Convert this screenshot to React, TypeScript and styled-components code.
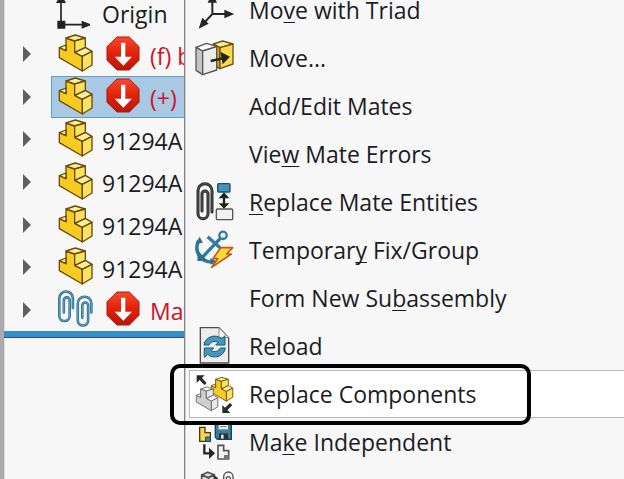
import React from "react";
import styled, { createGlobalStyle } from "styled-components";

const GlobalStyle = createGlobalStyle`
  * { box-sizing: border-box; }
  body {
    margin: 0;
    overflow: hidden;
    background: #f7f7f7;
    color: #1c1c24;
    font-family: "Open Sans", "Noto Sans", sans-serif;
    font-size: 23px;
    line-height: 32px;
  }
  button {
    font: inherit;
    color: inherit;
    background: none;
    border: 0;
    padding: 0;
    text-align: left;
  }
`;

const Page = styled.div`
  display: grid;
  grid-template-columns: 184px minmax(0, 1fr);
  height: 100vh;
  overflow: hidden;
`;

const TreePanel = styled.nav`
  border-left: 4px solid #ababab;
  box-shadow: inset 1px 0 0 #dcdcdc;
  overflow: hidden;
`;

const OriginRow = styled.div`
  display: flex;
  align-items: center;
  gap: 12px;
  height: 33px;
  padding-left: 50px;
  white-space: nowrap;
`;

const OriginLabel = styled.span`
  padding-bottom: 6px;
`;

const TreeList = styled.ul`
  display: grid;
  grid-auto-rows: 1fr;
  height: 298px;
  margin: 0;
  padding: 0;
  list-style: none;
`;

const TreeItem = styled.li`
  display: flex;
`;

const Toggle = styled.button`
  display: flex;
  align-items: center;
  width: 47px;
  padding-left: 19px;
`;

const Node = styled.button<{ $selected?: boolean; $error?: boolean }>`
  flex: 1;
  display: flex;
  align-items: center;
  min-width: 0;
  padding-left: 6px;
  overflow: hidden;
  white-space: nowrap;
  border: 1px solid ${(p) => (p.$selected ? "#5b9fcb" : "transparent")};
  border-right: 0;
  background: ${(p) => (p.$selected ? "#a8c8e3" : "transparent")};
  color: ${(p) => (p.$error ? "#cf1228" : "inherit")};
  svg { flex: none; }
`;

const NodeIcon = styled.span`
  display: flex;
  flex: none;
  padding-bottom: 2px;
`;

const NodeLabel = styled.span`
  padding-top: 3px;
  padding-left: 9px;
`;

const ErrorSlot = styled.span`
  display: flex;
  padding-left: 13px;
  padding-bottom: 2px;
`;

const RollbackBar = styled.div`
  height: 7px;
  background: #3590ca;
  border-bottom: 1px solid #2f45b4;
`;

const Menu = styled.div`
  position: relative;
  margin-top: -14px;
  border-left: 1px solid #858585;
  background: #f7f7f7;
  box-shadow: 1px 0 0 #cfcfcf inset;
`;

const MenuItem = styled.button<{ $active?: boolean }>`
  position: relative;
  display: flex;
  align-items: center;
  gap: 14px;
  width: calc(100% - 4px);
  height: 48px;
  margin-left: 4px;
  padding-left: 5px;
  white-space: nowrap;
  border: 1px solid ${(p) => (p.$active ? "#b9b9b9" : "transparent")};
  border-right: 0;
  background: ${(p) => (p.$active ? "#ffffff" : "transparent")};
`;

const IconSlot = styled.span`
  flex: none;
  width: 40px;
  height: 40px;
  svg { display: block; }
`;

const Mnemonic = styled.span`
  text-decoration: underline;
  text-decoration-thickness: 1px;
  text-underline-offset: 3px;
  text-decoration-skip-ink: none;
`;

const Callout = styled.span`
  position: absolute;
  z-index: 1;
  top: -7px;
  left: -20px;
  width: 361px;
  height: 61px;
  border: 4px solid #000;
  border-radius: 10px;
  pointer-events: none;
`;

function PartShape({ grey }: { grey?: boolean }) {
  const front = grey ? "#cfcfcf" : "#f8cb20";
  const top = grey ? "#fafafa" : "#fff0a0";
  const side = grey ? "#e8e8e8" : "#fbe260";
  return (
    <g stroke={grey ? "#666" : "#6b4b08"} strokeWidth="4" strokeLinejoin="round">
      <path fill={front} d="M4 41 24 50V12l26 9v34l23 12v44L4 71Z" />
      <path fill={top} d="m4 41 20-8v17ZM24 12 52 3l30 9-32 9ZM50 55l32-15 20 12-29 15Z" />
      <path fill={side} d="m50 21 32-9v28L50 55ZM73 67l29-15v41l-29 18Z" />
    </g>
  );
}

const PartIcon = () => (
  <svg width="35" height="38" viewBox="0 0 105 114" aria-hidden="true">
    <PartShape />
  </svg>
);

const ErrorIcon = () => (
  <svg width="35" height="35" viewBox="0 0 105 105" role="img" aria-label="Error">
    <defs>
      <linearGradient id="stop" x2="0" y2="1">
        <stop stopColor="#f9492c" />
        <stop offset=".5" stopColor="#e22209" />
        <stop offset="1" stopColor="#b91608" />
      </linearGradient>
    </defs>
    <path d="M33 3h37l29 29v41l-29 29H33L3 73V32Z" fill="url(#stop)" stroke="#a51a10" strokeWidth="3" />
    <path d="M45 20h13v42h20L52 89 26 62h19Z" fill="#fff" />
  </svg>
);

const Triangle = () => (
  <svg width="8" height="16" viewBox="0 0 8 16" aria-hidden="true">
    <path d="M0 0 8 8 0 16Z" fill="#606060" />
  </svg>
);

const OriginIcon = () => (
  <svg width="36" height="33" viewBox="0 0 108 99" aria-hidden="true">
    <path d="M21 74V0M21 74h70" stroke="#222" strokeWidth="5" fill="none" />
    <path d="M10 62h24v24H10ZM83 62l31 12-31 12ZM6 9 21-18 36 9Z" fill="#222" />
  </svg>
);

const ClipsIcon = () => (
  <svg width="35" height="38" viewBox="0 0 108 114" fill="none" aria-hidden="true">
    {["#2b6b8b", "#68a9c8"].map((stroke, i) => (
      <g key={stroke} stroke={stroke} strokeWidth={i ? 3 : 8} strokeLinecap="round">
        <path d="M46 54V24a21 21 0 0 0-42 0v54a16 16 0 0 0 32 0V30a9 9 0 0 0-18 0v38" />
        <path d="M103 68V40a21 21 0 0 0-42 0v52a16 16 0 0 0 32 0V46a9 9 0 0 0-18 0v38" />
      </g>
    ))}
  </svg>
);

const TriadIcon = () => (
  <>
    <path d="M52 24v48h42M52 72 26 100" fill="none" stroke="#262626" strokeWidth="6" />
    <path d="m52 10 14 28H38ZM88 59l30 13-30 13ZM11 116l11-33 19 18Z" fill="#262626" />
  </>
);

const MoveIcon = () => (
  <>
    <g stroke="#6b5311" strokeWidth="4" strokeLinejoin="round">
      <path d="m55 18 28-9 31 9-39 11Z" fill="#fff0a0" />
      <path d="m55 18 20 11v63l-20-10Z" fill="#d9a514" />
      <path d="m75 29 39-11v60L75 92Z" fill="#fada4c" />
    </g>
    <g stroke="#585858" strokeWidth="4" strokeLinejoin="round">
      <path d="m3 28 32-12 30 10-42 13Z" fill="#fff" />
      <path d="m3 28 20 11v71L3 97Z" fill="#c4c4c4" />
      <path d="m23 39 42-13v70l-42 14Z" fill="#ececec" />
    </g>
    <path d="m47 69 36-8" stroke="#222" strokeWidth="7" />
    <path d="m76 41 29 15-22 23Z" fill="#222" />
  </>
);

const MateIcon = () => (
  <>
    <g fill="none" strokeLinecap="round">
      <path d="M51 90V26a21 21 0 0 0-42 0v69a15 15 0 0 0 30 0V36a9 9 0 0 0-18 0v51" stroke="#2b2b2b" strokeWidth="9" />
      <path d="M51 90V26a21 21 0 0 0-42 0v69a15 15 0 0 0 30 0V36a9 9 0 0 0-18 0v51" stroke="#686868" strokeWidth="2" />
    </g>
    <rect x="68" y="5" width="37" height="25" rx="3" fill="#4097ba" stroke="#1c4e65" strokeWidth="4" />
    <path d="M87 42v28" stroke="#222" strokeWidth="7" />
    <path d="m87 31 16 18H71ZM71 64h32L87 80Z" fill="#222" />
    <rect x="64" y="81" width="49" height="32" rx="3" fill="#f0f0f0" stroke="#555" strokeWidth="4" />
  </>
);

const AnchorIcon = () => (
  <>
    <g fill="none" stroke="#2f7c9f" strokeWidth="10">
      <circle cx="84" cy="16" r="11" strokeWidth="7" />
      <path d="M76 25 20 84M38 20l37 33" />
      <path d="M11 32C-3 60 12 98 56 96" strokeWidth="11" />
    </g>
    <path d="M3 40 14 20l10 19ZM46 84l18 10-18 10ZM9 62 7 93l31 0Z" fill="#2b718f" />
    <path d="M77 53h36L95 72h14l-59 40 18-26H54Z" fill="#ffd83e" stroke="#be5b13" strokeWidth="5" strokeLinejoin="round" />
  </>
);

const ReloadIcon = () => (
  <>
    <path d="M16 5h56l29 30v76H16Z" fill="#ededed" stroke="#4d4d4d" strokeWidth="4" />
    <path d="M72 5v30h29Z" fill="#fff" stroke="#888" strokeWidth="3" />
    <g fill="#4497bd" stroke="#1e5873" strokeWidth="3" strokeLinejoin="round">
      <path d="M27 57c4-27 36-34 53-19l10-9v28H62l8-8C57 43 47 48 42 57Z" />
      <path d="M91 66c-4 27-36 34-53 19l-10 9V66h28l-8 8c13 6 23 1 28-8Z" />
    </g>
  </>
);

const ReplaceIcon = () => (
  <>
    <path d="M5 4h24l-8 8 14 15-7 6-14-15-9 9Z" fill="#292929" />
    <g transform="translate(46 8) scale(.66)"><PartShape /></g>
    <g transform="translate(1 37) scale(.66)"><PartShape grey /></g>
    <path d="M82 117V93l8 8 15-14 7 7-15 14 9 9Z" fill="#292929" />
  </>
);

const IndependentIcon = () => (
  <>
    <path d="M14 16h16v16h16v26H14Z" fill="#f8d646" stroke="#443711" strokeWidth="4" />
    <path d="M32 45h14v13H32Z" fill="#3987aa" stroke="#174b62" strokeWidth="3" />
    <path d="M61 0h48v52H67l-6-6Z" fill="#397f9f" stroke="#1c4356" strokeWidth="4" />
    <path d="M71 0h28v22H71Z" fill="#eee" />
    <path d="M75 7h20M75 14h20" stroke="#777" strokeWidth="3" />
    <path d="M72 34h27v18H72Z" fill="#24343c" />
    <path d="M78 38h8v12h-8Z" fill="#ddd" />
    <path d="M28 67v27h18" fill="none" stroke="#262626" strokeWidth="7" />
    <path d="m42 77 18 17-18 17Z" fill="#262626" />
    <path d="M69 70h17v16h15v25H69Z" fill="#f2f2f2" stroke="#555" strokeWidth="5" />
    <path d="M87 99h14v12H87Z" fill="#777" />
  </>
);

const CopyMatesIcon = () => (
  <>
    <g fill="#ddd" stroke="#505050" strokeWidth="5" strokeLinejoin="round">
      <path d="m20 15 18-8 20 7-18 9Z" />
      <path d="m20 15 20 8v30l-20-8ZM40 23l18-9v31l-18 8Z" />
    </g>
    <path d="M86 60V20a14 14 0 0 1 28 0v45M94 60V26a6 6 0 0 1 12 0v30" fill="none" stroke="#505050" strokeWidth="4" />
    <path d="m58 16 12 9-12 9Z" fill="#333" />
  </>
);

type TreeEntry = { label: string; error?: boolean; selected?: boolean; clips?: boolean };

const tree: TreeEntry[] = [
  { label: "(f) b", error: true },
  { label: "(+)", error: true, selected: true },
  { label: "91294A" },
  { label: "91294A" },
  { label: "91294A" },
  { label: "91294A" },
  { label: "Mates", error: true, clips: true },
];

type Entry = { label: string; mnemonic?: number; icon?: React.ReactNode; active?: boolean };

const entries: Entry[] = [
  { label: "Move with Triad", mnemonic: 2, icon: <TriadIcon /> },
  { label: "Move...", icon: <MoveIcon /> },
  { label: "Add/Edit Mates" },
  { label: "View Mate Errors", mnemonic: 3 },
  { label: "Replace Mate Entities", mnemonic: 0, icon: <MateIcon /> },
  { label: "Temporary Fix/Group", mnemonic: 8, icon: <AnchorIcon /> },
  { label: "Form New Subassembly", mnemonic: 11 },
  { label: "Reload", icon: <ReloadIcon /> },
  { label: "Replace Components", icon: <ReplaceIcon />, active: true },
  { label: "Make Independent", mnemonic: 2, icon: <IndependentIcon /> },
  { label: "", icon: <CopyMatesIcon /> },
];

function MenuLabel({ label, mnemonic }: { label: string; mnemonic?: number }) {
  if (mnemonic === undefined) return <span>{label}</span>;
  return (
    <span>
      {label.slice(0, mnemonic)}
      <Mnemonic>{label[mnemonic]}</Mnemonic>
      {label.slice(mnemonic + 1)}
    </span>
  );
}

export default function App() {
  return (
    <>
      <GlobalStyle />
      <Page>
        <TreePanel aria-label="Assembly tree">
          <OriginRow>
            <OriginIcon />
            <OriginLabel>Origin</OriginLabel>
          </OriginRow>
          <TreeList>
            {tree.map((item, i) => (
              <TreeItem key={i}>
                <Toggle aria-label="Expand"><Triangle /></Toggle>
                <Node $selected={item.selected} $error={item.error}>
                  <NodeIcon>{item.clips ? <ClipsIcon /> : <PartIcon />}</NodeIcon>
                  {item.error && <ErrorSlot><ErrorIcon /></ErrorSlot>}
                  <NodeLabel>{item.label}</NodeLabel>
                </Node>
              </TreeItem>
            ))}
          </TreeList>
          <RollbackBar />
        </TreePanel>
        <Menu role="menu">
          {entries.map((entry, i) => (
            <MenuItem key={i} role="menuitem" $active={entry.active} aria-label={entry.label || "Copy with Mates"}>
              <IconSlot>
                {entry.icon && (
                  <svg width="40" height="40" viewBox="0 0 120 120" aria-hidden="true">{entry.icon}</svg>
                )}
              </IconSlot>
              <MenuLabel label={entry.label} mnemonic={entry.mnemonic} />
              {entry.active && <Callout />}
            </MenuItem>
          ))}
        </Menu>
      </Page>
    </>
  );
}
